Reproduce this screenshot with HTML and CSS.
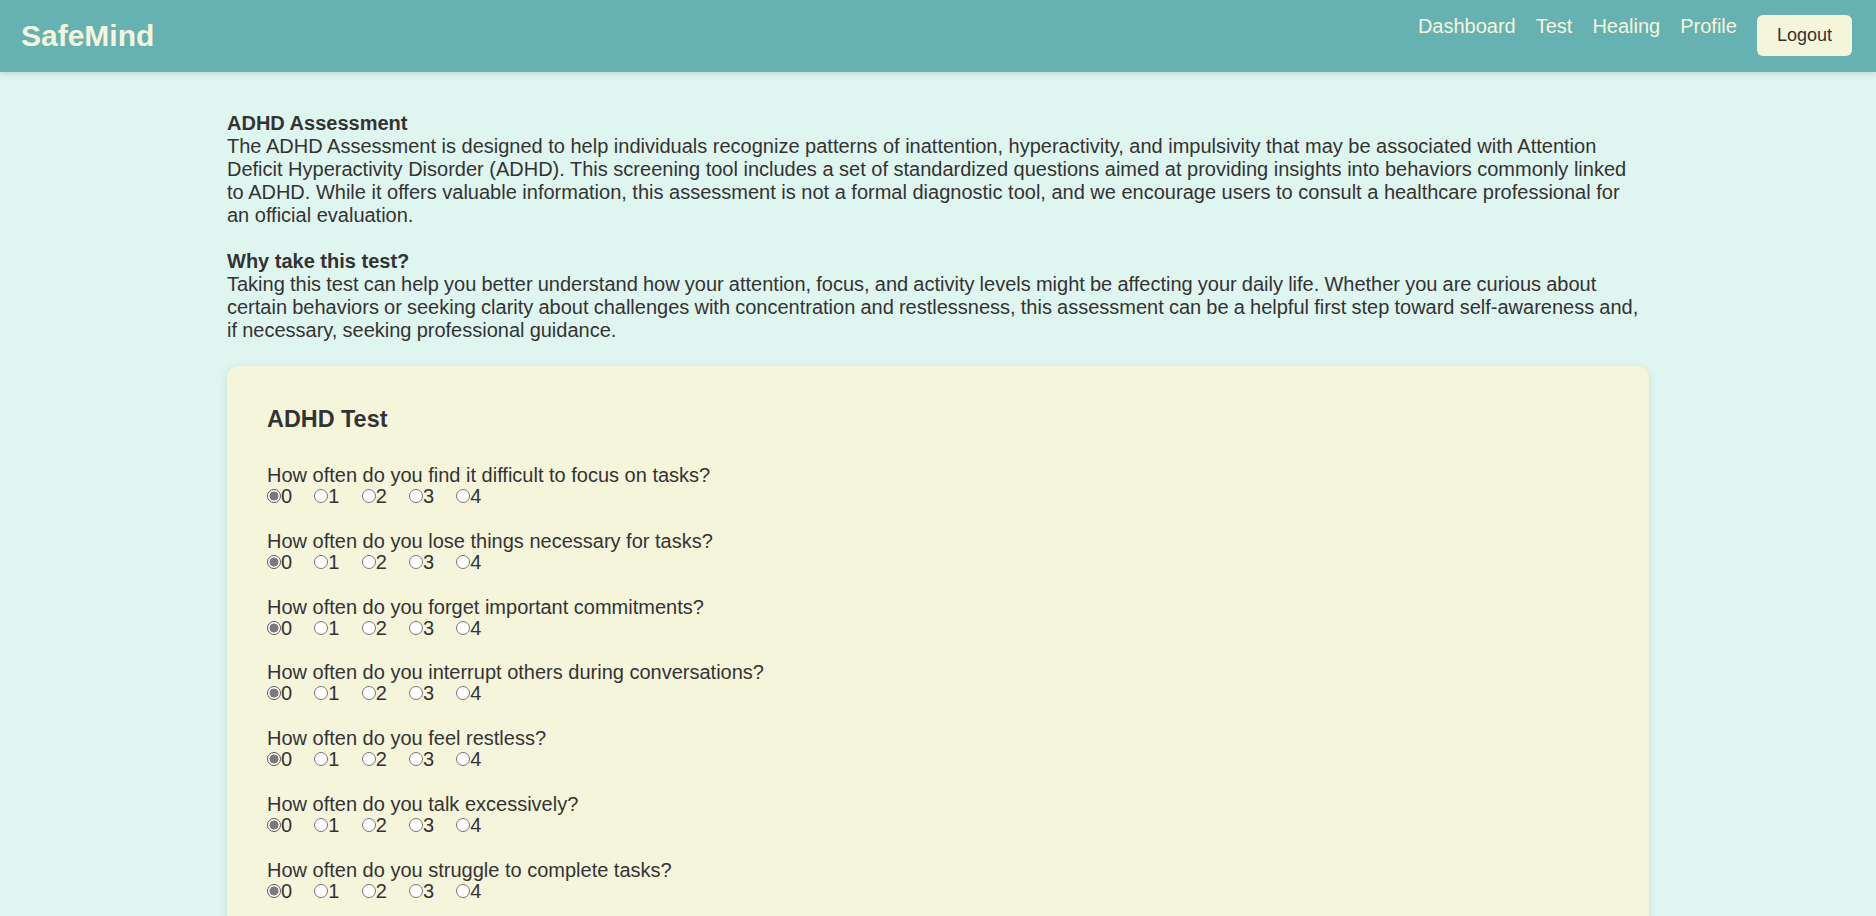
FILE: index.html
```html
<!DOCTYPE html>
<html lang="en">
<head>
<meta charset="utf-8">
<title>SafeMind - ADHD Test</title>
<link rel="stylesheet" href="styles.css">
</head>
<body>
<header class="topbar">
  <div class="logo">SafeMind</div>
  <nav class="nav">
    <a class="nav-link" href="#">Dashboard</a>
    <a class="nav-link" href="#">Test</a>
    <a class="nav-link" href="#">Healing</a>
    <a class="nav-link" href="#">Profile</a>
    <button class="logout" type="button">Logout</button>
  </nav>
</header>

<main class="page">
  <section class="intro">
    <p class="intro-block"><strong class="intro-title">ADHD Assessment</strong>The ADHD Assessment is designed to help individuals recognize patterns of inattention, hyperactivity, and impulsivity that may be associated with Attention Deficit Hyperactivity Disorder (ADHD). This screening tool includes a set of standardized questions aimed at providing insights into behaviors commonly linked to ADHD. While it offers valuable information, this assessment is not a formal diagnostic tool, and we encourage users to consult a healthcare professional for an official evaluation.</p>
    <p class="intro-block gap tight"><strong class="intro-title">Why take this test?</strong>Taking this test can help you better understand how your attention, focus, and activity levels might be affecting your daily life. Whether you are curious about certain behaviors or seeking clarity about challenges with concentration and restlessness, this assessment can be a helpful first step toward self-awareness and, if necessary, seeking professional guidance.</p>
  </section>

  <form class="card">
    <h3 class="card-title">ADHD Test</h3>

    <div class="question">
      <div class="q-text">How often do you find it difficult to focus on tasks?</div>
      <div class="options">
        <label class="opt"><input type="radio" name="q1" checked>0</label><label class="opt"><input type="radio" name="q1">1</label><label class="opt"><input type="radio" name="q1">2</label><label class="opt"><input type="radio" name="q1">3</label><label class="opt"><input type="radio" name="q1">4</label>
      </div>
    </div>

    <div class="question">
      <div class="q-text">How often do you lose things necessary for tasks?</div>
      <div class="options">
        <label class="opt"><input type="radio" name="q2" checked>0</label><label class="opt"><input type="radio" name="q2">1</label><label class="opt"><input type="radio" name="q2">2</label><label class="opt"><input type="radio" name="q2">3</label><label class="opt"><input type="radio" name="q2">4</label>
      </div>
    </div>

    <div class="question">
      <div class="q-text">How often do you forget important commitments?</div>
      <div class="options">
        <label class="opt"><input type="radio" name="q3" checked>0</label><label class="opt"><input type="radio" name="q3">1</label><label class="opt"><input type="radio" name="q3">2</label><label class="opt"><input type="radio" name="q3">3</label><label class="opt"><input type="radio" name="q3">4</label>
      </div>
    </div>

    <div class="question">
      <div class="q-text">How often do you interrupt others during conversations?</div>
      <div class="options">
        <label class="opt"><input type="radio" name="q4" checked>0</label><label class="opt"><input type="radio" name="q4">1</label><label class="opt"><input type="radio" name="q4">2</label><label class="opt"><input type="radio" name="q4">3</label><label class="opt"><input type="radio" name="q4">4</label>
      </div>
    </div>

    <div class="question">
      <div class="q-text">How often do you feel restless?</div>
      <div class="options">
        <label class="opt"><input type="radio" name="q5" checked>0</label><label class="opt"><input type="radio" name="q5">1</label><label class="opt"><input type="radio" name="q5">2</label><label class="opt"><input type="radio" name="q5">3</label><label class="opt"><input type="radio" name="q5">4</label>
      </div>
    </div>

    <div class="question">
      <div class="q-text">How often do you talk excessively?</div>
      <div class="options">
        <label class="opt"><input type="radio" name="q6" checked>0</label><label class="opt"><input type="radio" name="q6">1</label><label class="opt"><input type="radio" name="q6">2</label><label class="opt"><input type="radio" name="q6">3</label><label class="opt"><input type="radio" name="q6">4</label>
      </div>
    </div>

    <div class="question">
      <div class="q-text">How often do you struggle to complete tasks?</div>
      <div class="options">
        <label class="opt"><input type="radio" name="q7" checked>0</label><label class="opt"><input type="radio" name="q7">1</label><label class="opt"><input type="radio" name="q7">2</label><label class="opt"><input type="radio" name="q7">3</label><label class="opt"><input type="radio" name="q7">4</label>
      </div>
    </div>

    <button class="submit" type="button">Submit</button>
  </form>
</main>
</body>
</html>
```

FILE: styles.css
```css
html {
  scrollbar-width: none;
}

body {
  margin: 0;
  background: #dff5ef;
  color: #333333;
  font-family: "Liberation Sans", Arial, sans-serif;
  font-size: 20px;
}

.topbar {
  height: 72px;
  box-sizing: border-box;
  padding: 0 24px 0 21px;
  display: flex;
  align-items: center;
  justify-content: space-between;
  background: #66b2b2;
  box-shadow: 0 2px 6px rgba(0, 0, 0, 0.12);
  position: relative;
}

.logo {
  color: #f5f5dc;
  font-size: 30px;
  font-weight: bold;
}

.nav {
  display: flex;
  gap: 20px;
  align-self: flex-start;
  margin-top: 15px;
}

.nav-link {
  color: #f5f5dc;
  text-decoration: none;
  font-size: 20px;
}

.logout {
  background: #f5f5dc;
  color: #333333;
  border: none;
  border-radius: 6px;
  padding: 10px 20px;
  font-family: "Liberation Sans", Arial, sans-serif;
  font-size: 18px;
  line-height: normal;
}

.page {
  width: 1422px;
  margin: 0 auto;
  padding-top: 40px;
}

.intro {
  width: 1417px;
  margin-bottom: 24px;
}

.intro-block {
  margin: 0;
}

.intro-block.gap {
  margin-top: 23px;
}

.intro-block.tight {
  word-spacing: -0.4px;
}

.intro-title {
  display: block;
  word-spacing: normal;
}

.card {
  background: #f5f5dc;
  border-radius: 12px;
  padding: 40px;
  box-shadow: 0 2px 10px rgba(0, 0, 0, 0.1);
}

.card-title {
  margin: 0 0 32px;
  font-size: 23.4px;
  font-weight: bold;
}

.question {
  margin-bottom: 23.8px;
  font-size: 20px;
}

.q-text {
  line-height: 20px;
}

.options {
  line-height: 22px;
}

.opt {
  margin-right: 22.2px;
}

.opt input {
  appearance: none;
  -webkit-appearance: none;
  width: 14px;
  height: 14px;
  margin: 4px 0 0 0;
  border: 1px solid #767676;
  border-radius: 50%;
  background: #ffffff;
  box-sizing: border-box;
  vertical-align: baseline;
}

.opt input:checked {
  border-color: #5a5a5a;
  background: radial-gradient(circle, #7a7a7a 0 4.2px, #ffffff 4.8px);
}

.submit {
  background: #66b2b2;
  color: #f5f5dc;
  border: none;
  border-radius: 6px;
  padding: 10px 20px;
  font-size: 18px;
  font-family: "Liberation Sans", Arial, sans-serif;
}
```
